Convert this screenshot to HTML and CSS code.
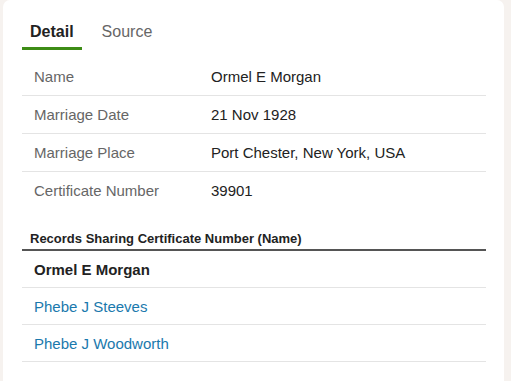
FILE: index.html
```html
<!DOCTYPE html>
<html lang="en">
<head>
  <meta charset="UTF-8">
  <title>Record Detail</title>
  <link rel="stylesheet" href="styles.css">
</head>
<body>
  <div class="card">
    <div class="tabs">
      <span class="tab active">Detail</span>
      <span class="tab">Source</span>
    </div>

    <table class="facts">
      <tr><td class="label">Name</td><td>Ormel E Morgan</td></tr>
      <tr><td class="label">Marriage Date</td><td>21 Nov 1928</td></tr>
      <tr><td class="label">Marriage Place</td><td>Port Chester, New York, USA</td></tr>
      <tr><td class="label">Certificate Number</td><td>39901</td></tr>
    </table>

    <table class="shared">
      <tr><th>Records Sharing Certificate Number (Name)</th></tr>
      <tr><td class="self">Ormel E Morgan</td></tr>
      <tr><td><a href="#">Phebe J Steeves</a></td></tr>
      <tr><td><a href="#">Phebe J Woodworth</a></td></tr>
    </table>
  </div>
</body>
</html>
```

FILE: styles.css
```css
body {
  margin: 0;
  background-color: #f6f2ef;
  font-family: "Liberation Sans", Arial, sans-serif;
  color: #222;
}

.card {
  background-color: #fff;
  margin-left: 3px;
  width: 501px;
  height: 381px;
  border-radius: 7px 7px 0 0;
  padding: 0 18px 0 19px;
  box-sizing: border-box;
}

.tabs {
  display: flex;
  padding-top: 21px;
}

.tab {
  font-size: 16px;
  padding: 2px 8px 6px;
  color: #666;
  margin-right: 12px;
  border-bottom: 3px solid transparent;
}

.tab.active {
  font-weight: bold;
  color: #222;
  border-bottom-color: #3d8c16;
}

table {
  width: 100%;
  border-collapse: collapse;
}

.facts {
  margin-top: 8px;
}

.facts td {
  font-size: 15px;
  height: 37px;
  padding: 0 12px;
  border-bottom: 1px solid #e4e4e4;
}

.facts tr:last-child td {
  border-bottom: none;
}

.facts td.label {
  color: #666;
  width: 153px;
}

.shared {
  margin-top: 22px;
}

.shared th {
  text-align: left;
  font-size: 13px;
  padding: 0 8px 3px;
  border-bottom: 2px solid #555;
}

.shared td {
  font-size: 15px;
  height: 36px;
  padding: 0 12px;
  border-bottom: 1px solid #e4e4e4;
}

.shared td.self {
  font-weight: bold;
}

.shared a {
  color: #1a79ad;
  text-decoration: none;
}
```
